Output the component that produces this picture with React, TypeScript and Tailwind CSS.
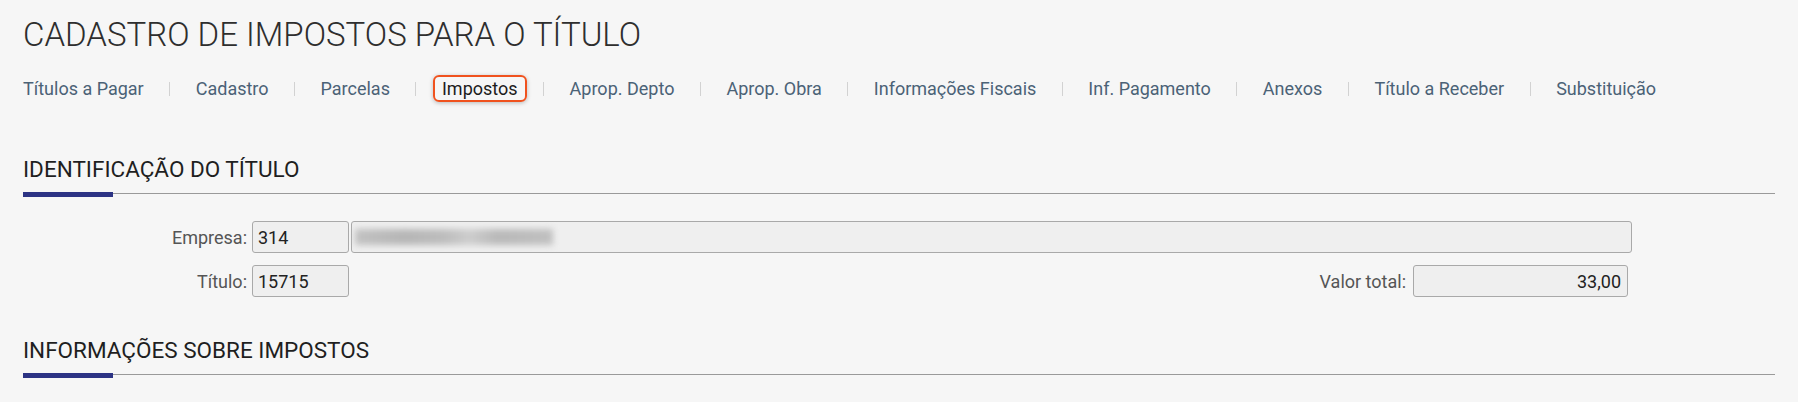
import React from "react";

const tabs = [
  "Títulos a Pagar",
  "Cadastro",
  "Parcelas",
  "Impostos",
  "Aprop. Depto",
  "Aprop. Obra",
  "Informações Fiscais",
  "Inf. Pagamento",
  "Anexos",
  "Título a Receber",
  "Substituição",
];

function SectionHeader({ title, className }: { title: string; className?: string }) {
  return (
    <div className={className}>
      <div className="text-[22.5px] leading-[26px] text-[#1f1f1f]">{title}</div>
      <div className="mt-[10px] flex items-start">
        <div className="h-[5px] w-[90px] bg-[#2c3384]" />
        <div className="mt-px h-px flex-1 bg-[#9a9a9a]" />
      </div>
    </div>
  );
}

export default function App() {
  return (
    <div
      className="min-h-screen bg-[#f6f6f6] px-[23px] pt-[17px]"
      style={{ fontFamily: "Roboto, 'Noto Sans', sans-serif" }}
    >
      <h1 className="text-[33px] font-light leading-[35px] text-[#2e2e2e]">
        CADASTRO DE IMPOSTOS PARA O TÍTULO
      </h1>

      <nav className="-ml-[9px] mt-[23px] flex items-center">
        {tabs.map((t, i) => (
          <React.Fragment key={t}>
            {i > 0 && <div className="mx-[16.5px] h-[14px] w-px bg-[#d2d2d2]" />}
            {t === "Impostos" ? (
              <div className="rounded-[6px] border-2 border-[#f0521e] px-[7px] text-[18px] leading-[23px] text-[#1c1c1c] shadow-[0_1px_4px_rgba(0,0,0,0.25)]">
                {t}
              </div>
            ) : (
              <div className="border-2 border-transparent px-[7px] text-[18px] leading-[23px] text-[#4b6276]">
                {t}
              </div>
            )}
          </React.Fragment>
        ))}
      </nav>

      <SectionHeader title="IDENTIFICAÇÃO DO TÍTULO" className="mt-[54px]" />

      <div className="mt-[24px] flex flex-col gap-[12px] text-[18px]">
        <div className="flex items-center pr-[143px]">
          <div className="mr-[5px] w-[224px] text-right text-[#555]">Empresa:</div>
          <div className="flex h-[32px] w-[97px] items-center rounded-[3px] border border-[#a9a9a9] bg-[#efefef] pl-[5px] text-[#222]">
            314
          </div>
          <div className="ml-[2px] flex h-[32px] flex-1 items-center rounded-[3px] border border-[#a9a9a9] bg-[#efefef] pl-[3px]">
            <div className="h-[16px] w-[198px] bg-[linear-gradient(90deg,#c2c2c2,#b6b6b6_25%,#bdbdbd_45%,#cdcdcd_58%,#b9b9b9_72%,#c0c0c0)] blur-[3px]" />
          </div>
        </div>
        <div className="flex items-center pr-[147px]">
          <div className="mr-[5px] w-[224px] text-right text-[#555]">Título:</div>
          <div className="flex h-[32px] w-[97px] items-center rounded-[3px] border border-[#a9a9a9] bg-[#efefef] pl-[5px] text-[#222]">
            15715
          </div>
          <div className="flex-1" />
          <div className="mr-[7px] text-[#555]">Valor total:</div>
          <div className="flex h-[32px] w-[215px] items-center justify-end rounded-[3px] border border-[#a9a9a9] bg-[#efefef] pr-[6px] text-[#222]">
            33,00
          </div>
        </div>
      </div>

      <SectionHeader title="INFORMAÇÕES SOBRE IMPOSTOS" className="mt-[40px]" />
    </div>
  );
}
